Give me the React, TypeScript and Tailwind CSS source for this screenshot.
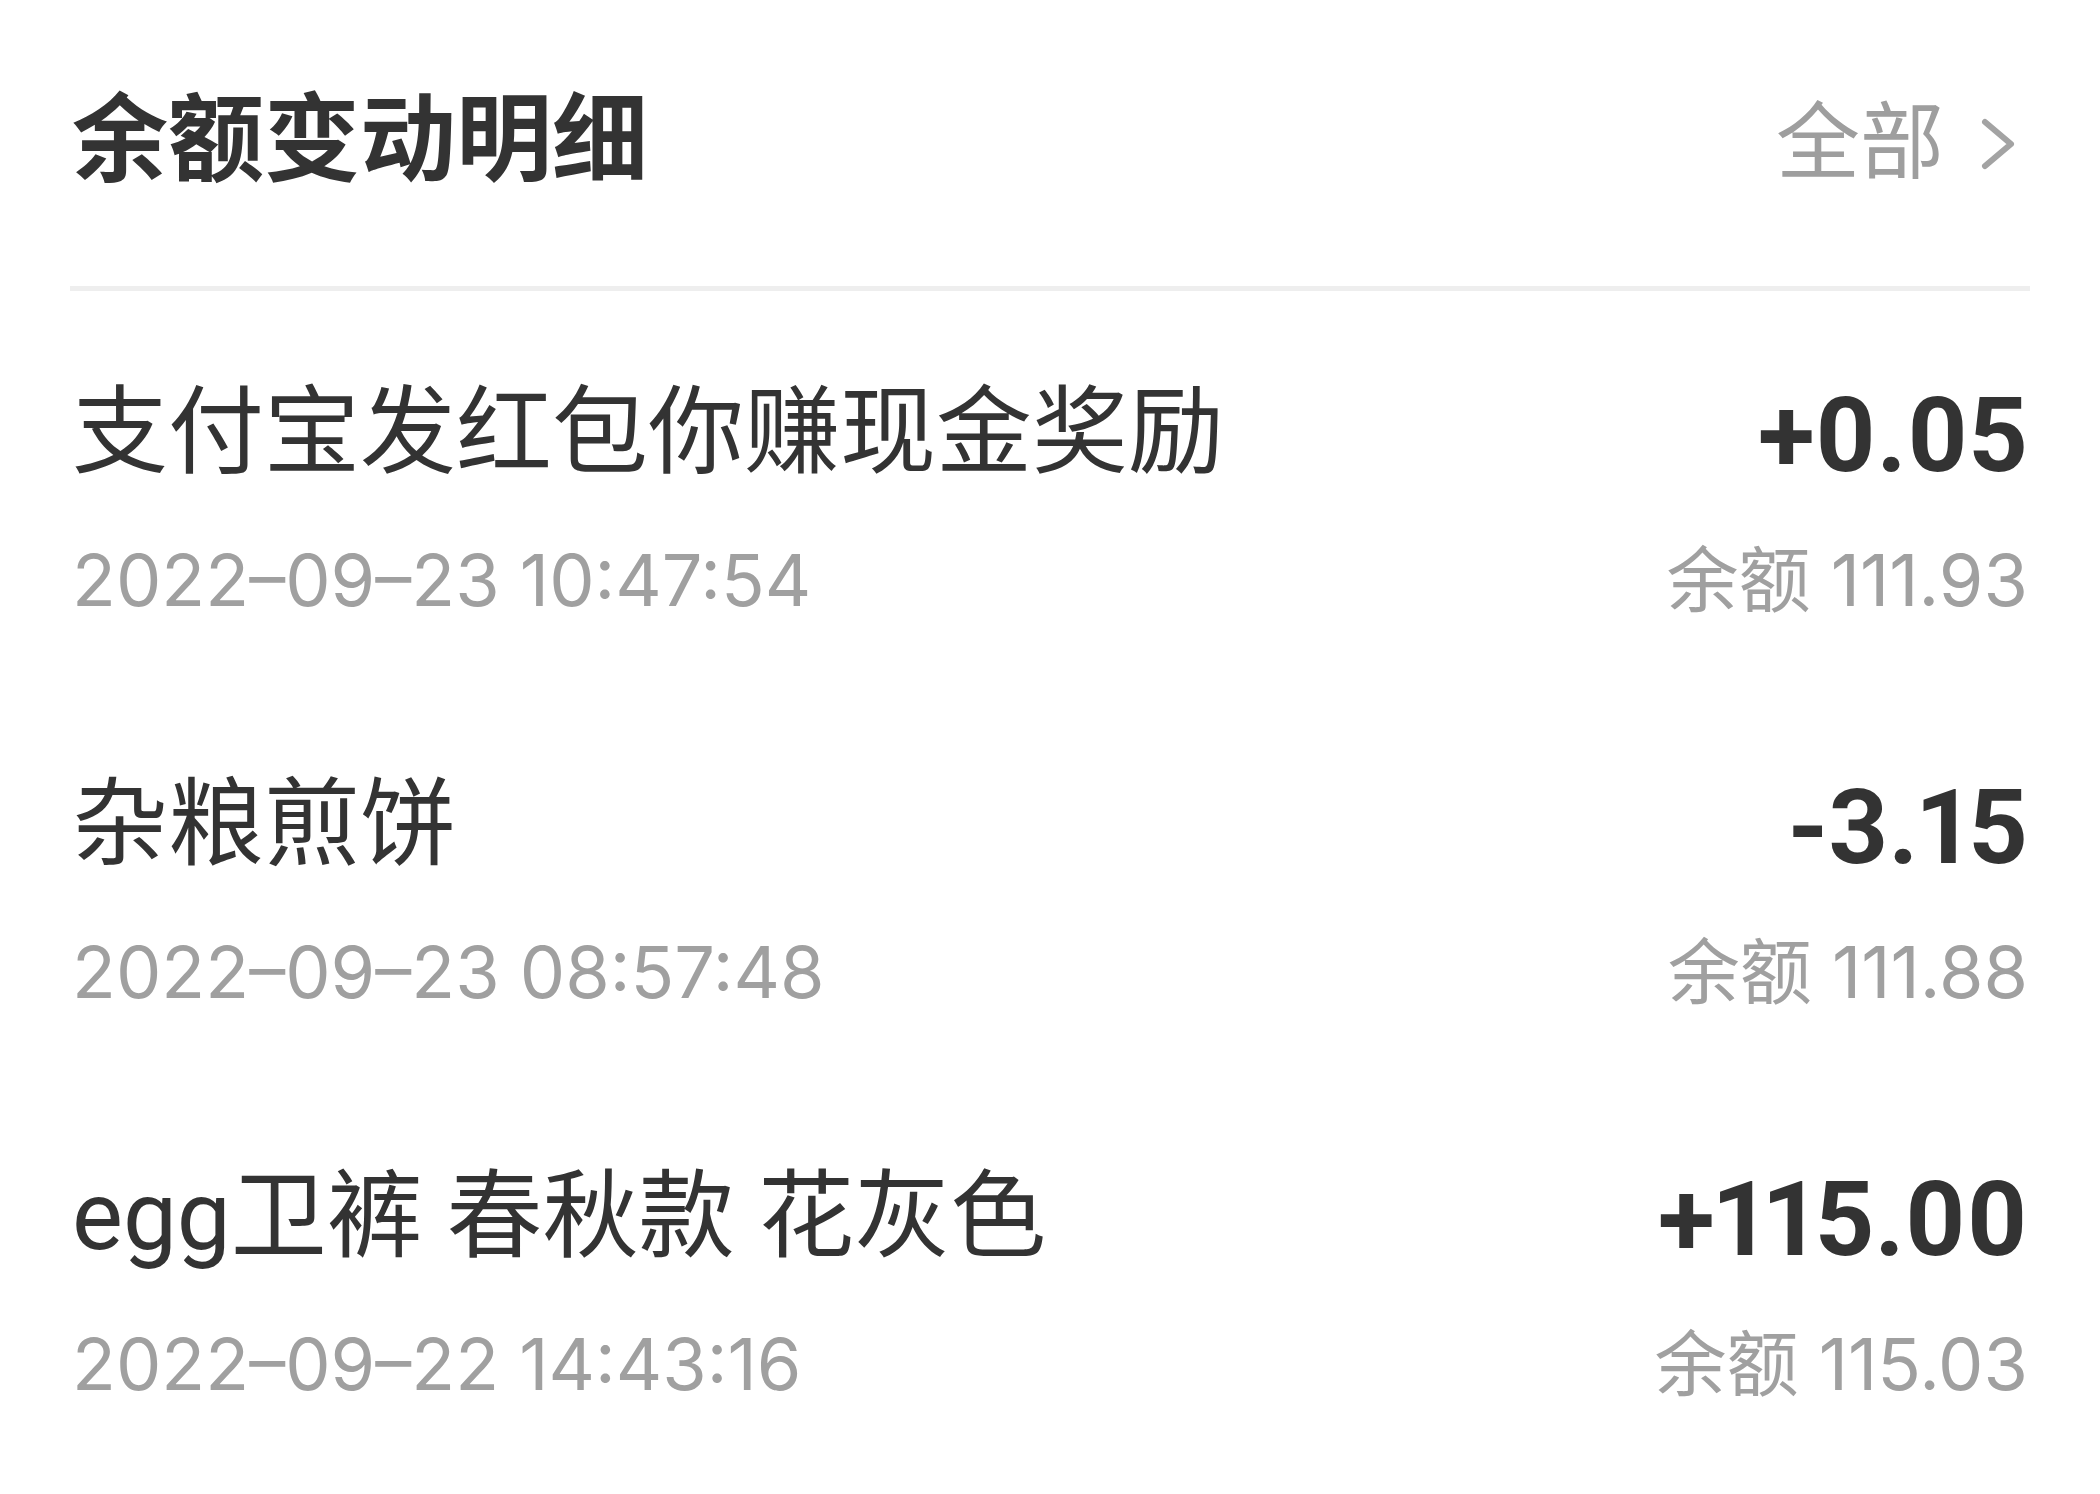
const rows = [
  { title: '支付宝发红包你赚现金奖励', time: '2022–09–23 10:47:54', amount: '+0.05', balance: '111.93' },
  { title: '杂粮煎饼', time: '2022–09–23 08:57:48', amount: '-3.15', balance: '111.88' },
  { title: 'egg卫裤 春秋款 花灰色', time: '2022–09–22 14:43:16', amount: '+115.00', balance: '115.03' },
]

const base = { fontFamily: 'Roboto, "Noto Sans CJK SC", sans-serif' }
const nums = { fontFamily: 'Inter, "Noto Sans CJK SC", sans-serif' }

export default function App() {
  return (
    <div className="w-[2100px] h-[1494px] bg-white px-[72px]" style={base}>
      <div className="h-[286px] pb-[6px] flex items-center justify-between">
        <h1 className="text-[96px] leading-[120px] font-bold text-[#333333]">余额变动明细</h1>
        <div className="flex items-center gap-[36px] pr-[10px] pt-[8px] text-[84px] leading-[100px] text-[#9e9e9e]">
          <span>全部</span>
          <svg width="38" height="52" viewBox="0 0 38 52" fill="none">
            <path d="M5 4 L31 26 L5 48" stroke="#a3a3a3" strokeWidth="6" strokeLinecap="round" strokeLinejoin="round" />
          </svg>
        </div>
      </div>
      <div className="h-[5px] bg-[#eeeeee] -mx-[2px]" />

      {rows.map((r) => (
        <div key={r.time} className="h-[392px] pt-[81px] flex justify-between">
          <div className="flex flex-col gap-[43px]">
            <div className="text-[96px] leading-[120px] text-[#333333]">{r.title}</div>
            <div className="text-[72px] leading-[90px] text-[#a0a0a0]" style={nums}>{r.time}</div>
          </div>
          <div className="flex flex-col items-end gap-[39px]">
            <div className="mt-[4px] text-[104px] leading-[120px] font-bold text-[#333333] proportional-nums">{r.amount}</div>
            <div className="text-[72px] leading-[90px] text-[#a0a0a0]" style={nums}>余额 {r.balance}</div>
          </div>
        </div>
      ))}
    </div>
  )
}
